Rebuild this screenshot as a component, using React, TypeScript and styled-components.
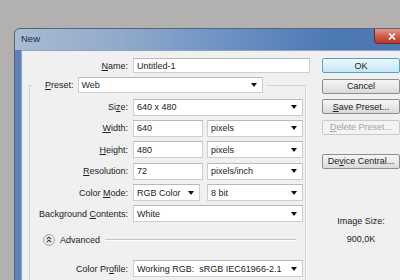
import React from "react";
import styled, { createGlobalStyle } from "styled-components";

const GlobalStyle = createGlobalStyle`
  html, body {
    margin: 0;
    padding: 0;
    background: #b2b1af;
    overflow: hidden;
  }
  body {
    width: 400px;
    height: 280px;
    font-family: "Liberation Sans", Arial, sans-serif;
    font-size: 9px;
    color: #222;
  }
`;

const Page = styled.div`
  width: 400px;
  height: 280px;
  overflow: hidden;
  padding: 28px 0 0 14px;
  box-sizing: border-box;
`;

const Window = styled.div`
  width: 400px;
  height: 252px;
  display: flex;
  flex-direction: column;
  border: 1px solid #56667a;
  border-bottom: none;
  border-radius: 6px 6px 0 0;
  overflow: hidden;
  background: #7093c4;
`;

const TitleBar = styled.div`
  flex-shrink: 0;
  height: 21px;
  display: flex;
  align-items: flex-start;
  background: linear-gradient(90deg, #a9bbd3 0%, #93abcb 25%, #6a8fc2 55%, #4b77b3 80%, #5079b4 100%);
`;

const Title = styled.span`
  margin: 4px 0 0 6px;
  font-size: 9.5px;
  color: #1b2838;
`;

const CloseButton = styled.div`
  margin-left: auto;
  margin-right: 5px;
  width: 34px;
  height: 14px;
  display: flex;
  align-items: center;
  justify-content: center;
  border: 1px solid #6f2a24;
  border-top: none;
  border-radius: 0 0 4px 4px;
  background: linear-gradient(#e59a8c, #cf5c4b 50%, #b8382a);
`;

const Frame = styled.div`
  flex: 1;
  min-height: 0;
  display: flex;
  padding-left: 6px;
  background: linear-gradient(90deg, #5d82b7, #7b9dcb 60%, #6b8fc3);
`;

const Client = styled.div`
  flex: 1;
  display: flex;
  align-items: flex-start;
  overflow: hidden;
  background: #f0f0f0;
  border-left: 1px solid #8ea3bf;
  border-top: 1px solid #8ea3bf;
`;

const FormColumn = styled.div`
  flex-shrink: 0;
  width: 294px;
  padding-top: 7px;
  display: flex;
  flex-direction: column;
`;

const SideColumn = styled.div`
  flex-shrink: 0;
  width: 78px;
  margin-left: 6px;
  padding-top: 7px;
  display: flex;
  flex-direction: column;
  gap: 5.5px;
`;

const Row = styled.div<{ $label: number; $control: number; $top?: number }>`
  flex-shrink: 0;
  display: grid;
  grid-template-columns: ${(p) => p.$label}px ${(p) => p.$control}px;
  column-gap: 5px;
  align-items: center;
  height: ${(p) => (p.$label > 100 ? 15 : 17)}px;
  margin-top: ${(p) => p.$top ?? 0}px;
`;

const Label = styled.span`
  text-align: right;
  white-space: nowrap;
`;

const Key = styled.span`
  text-decoration: underline;
`;

const Input = styled.div<{ $width?: number }>`
  height: 100%;
  box-sizing: border-box;
  width: ${(p) => (p.$width ? `${p.$width}px` : "auto")};
  display: flex;
  align-items: center;
  padding-left: 3px;
  background: #fff;
  border: 1px solid #cdcdcd;
  border-top-color: #b9b9b9;
  white-space: nowrap;
`;

const Select = styled(Input)`
  padding-right: 5px;
`;

const Arrow = styled.span`
  margin-left: auto;
  width: 0;
  height: 0;
  border-left: 3px solid transparent;
  border-right: 3px solid transparent;
  border-top: 4px solid #111;
`;

const Pair = styled.div`
  height: 100%;
  display: flex;
  justify-content: space-between;
`;

const GroupBox = styled.fieldset`
  flex-shrink: 0;
  margin: 4px 10px 0 7px;
  padding: 5.5px 2px 40px 0;
  min-width: 0;
  border: 1px solid #d2d2d2;
  box-shadow: 1px 1px 0 #fbfbfb;
`;

const Legend = styled.legend`
  display: flex;
  align-items: center;
  gap: 4px;
  height: 16px;
  margin-left: 3px;
  padding: 0 3px 0 12px;
`;

const Rows = styled.div`
  display: flex;
  flex-direction: column;
  gap: 4.4px;
`;

const AdvancedRow = styled.div`
  display: flex;
  align-items: center;
  height: 12px;
  margin: 11.5px 7px 0 13px;
  gap: 5px;
`;

const Rule = styled.div`
  flex: 1;
  height: 1px;
  background: #c4c4c4;
  border-bottom: 1px solid #fdfdfd;
`;

const Button = styled.div<{ $variant?: "default" | "disabled"; $top?: number }>`
  flex-shrink: 0;
  height: 15px;
  box-sizing: border-box;
  display: flex;
  align-items: center;
  justify-content: center;
  border-radius: 2px;
  margin-top: ${(p) => p.$top ?? 0}px;
  border: 1px solid
    ${(p) =>
      p.$variant === "default" ? "#4ea6cd" : p.$variant === "disabled" ? "#c9c9c9" : "#8d8d8d"};
  background: ${(p) =>
    p.$variant === "default"
      ? "linear-gradient(#f0f9fd, #d9eff8 50%, #c6e6f4)"
      : p.$variant === "disabled"
      ? "#f3f3f3"
      : "linear-gradient(#f6f6f6, #e9e9e9 50%, #d9d9d9)"};
  color: ${(p) => (p.$variant === "disabled" ? "#a5a5a5" : "#222")};
  white-space: nowrap;
`;

const Info = styled.div<{ $top: number }>`
  margin-top: ${(p) => p.$top}px;
  text-align: center;
  line-height: 11px;
`;

const AdvancedIcon = () => (
  <svg width="12" height="12" viewBox="0 0 12 12">
    <circle cx="6" cy="6" r="5.5" fill="#ececec" stroke="#a8a8a8" />
    <path d="M3.8 5.2 L6 3.2 L8.2 5.2 M3.8 8.2 L6 6.2 L8.2 8.2" fill="none" stroke="#333" strokeWidth="1.1" />
  </svg>
);

const CloseIcon = () => (
  <svg width="8" height="7" viewBox="0 0 8 7">
    <path d="M1 0.5 L7 6.5 M7 0.5 L1 6.5" stroke="#fff" strokeWidth="1.6" />
  </svg>
);

const App = () => {
  return (
    <Page>
      <GlobalStyle />
      <Window>
        <TitleBar>
          <Title>New</Title>
          <CloseButton>
            <CloseIcon />
          </CloseButton>
        </TitleBar>
        <Frame>
          <Client>
            <FormColumn>
              <Row $label={106} $control={177}>
                <Label>
                  <Key>N</Key>ame:
                </Label>
                <Input>Untitled-1</Input>
              </Row>
              <GroupBox>
                <Legend>
                  <Label>
                    <Key>P</Key>reset:
                  </Label>
                  <Select $width={185}>
                    Web
                    <Arrow />
                  </Select>
                </Legend>
                <Rows>
                  <Row $label={98} $control={170}>
                    <Label>
                      Si<Key>z</Key>e:
                    </Label>
                    <Select>
                      640 x 480
                      <Arrow />
                    </Select>
                  </Row>
                  <Row $label={98} $control={170}>
                    <Label>
                      <Key>W</Key>idth:
                    </Label>
                    <Pair>
                      <Input $width={70}>640</Input>
                      <Select $width={96}>
                        pixels
                        <Arrow />
                      </Select>
                    </Pair>
                  </Row>
                  <Row $label={98} $control={170}>
                    <Label>
                      <Key>H</Key>eight:
                    </Label>
                    <Pair>
                      <Input $width={70}>480</Input>
                      <Select $width={96}>
                        pixels
                        <Arrow />
                      </Select>
                    </Pair>
                  </Row>
                  <Row $label={98} $control={170}>
                    <Label>
                      <Key>R</Key>esolution:
                    </Label>
                    <Pair>
                      <Input $width={70}>72</Input>
                      <Select $width={96}>
                        pixels/inch
                        <Arrow />
                      </Select>
                    </Pair>
                  </Row>
                  <Row $label={98} $control={170}>
                    <Label>
                      Color <Key>M</Key>ode:
                    </Label>
                    <Pair>
                      <Select $width={67}>
                        RGB Color
                        <Arrow />
                      </Select>
                      <Select $width={96}>
                        8 bit
                        <Arrow />
                      </Select>
                    </Pair>
                  </Row>
                  <Row $label={98} $control={170}>
                    <Label>
                      Background <Key>C</Key>ontents:
                    </Label>
                    <Select>
                      White
                      <Arrow />
                    </Select>
                  </Row>
                </Rows>
                <AdvancedRow>
                  <AdvancedIcon />
                  <span>Advanced</span>
                  <Rule />
                </AdvancedRow>
                <Row $label={98} $control={170} $top={14.5}>
                  <Label>
                    Color Pr<Key>o</Key>file:
                  </Label>
                  <Select>
                    Working RGB:&nbsp; sRGB IEC61966-2.1
                    <Arrow />
                  </Select>
                </Row>
              </GroupBox>
            </FormColumn>
            <SideColumn>
              <Button $variant="default">OK</Button>
              <Button>Cancel</Button>
              <Button>
                <Key>S</Key>ave Preset...
              </Button>
              <Button $variant="disabled">
                <Key>D</Key>elete Preset...
              </Button>
              <Button $top={13.5}>
                De<Key>v</Key>ice Central...
              </Button>
              <Info $top={41.5}>Image Size:</Info>
              <Info $top={1.5}>900,0K</Info>
            </SideColumn>
          </Client>
        </Frame>
      </Window>
    </Page>
  );
};

export default App;
